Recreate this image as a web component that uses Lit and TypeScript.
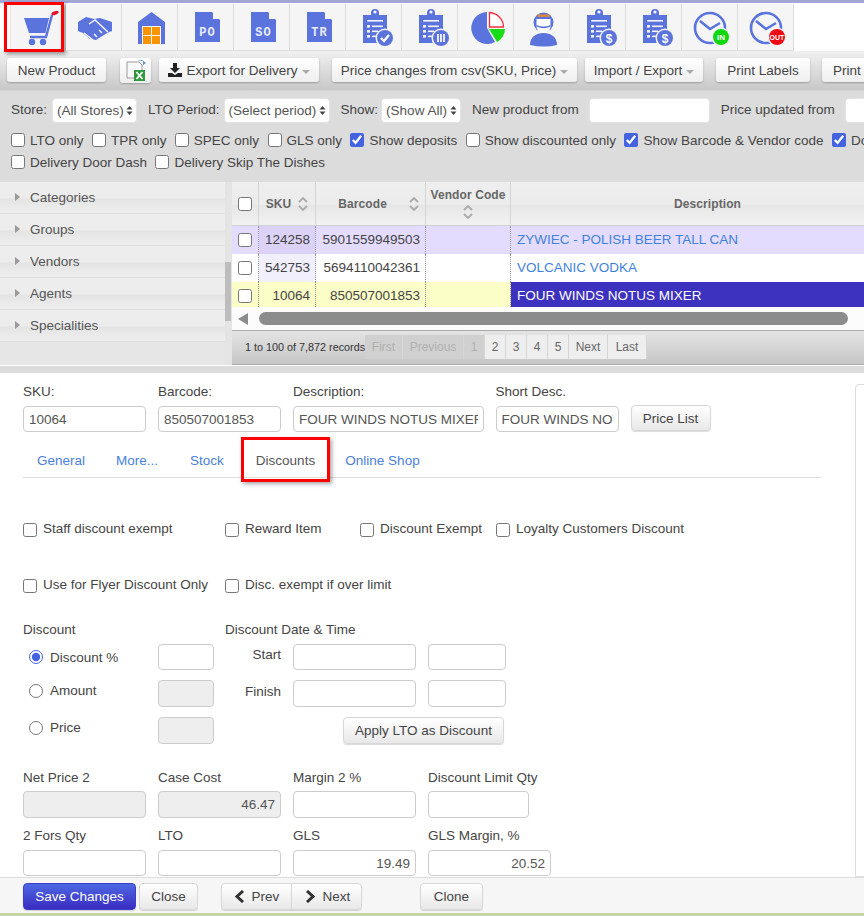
import { LitElement, html, css } from 'lit';
import { customElement } from 'lit/decorators.js';

const BLUE = '#5b73dc';

const clipboard = (badge: unknown) => html`
  <svg width="56" height="46" viewBox="0 0 56 46">
    <path fill=${BLUE} d="M17 11h8v-2a4 4 0 0 1 8 0v2h8v28H17z"/>
    <circle cx="29" cy="8" r="1.6" fill="#f5f5f5"/>
    <g fill="#f5f5f5">
      <rect x="21" y="16" width="16" height="1.6"/>
      <rect x="21" y="21" width="3" height="2.6"/><rect x="26" y="21.5" width="11" height="1.6"/>
      <rect x="21" y="26" width="3" height="2.6"/><rect x="26" y="26.5" width="6" height="1.6"/>
      <rect x="21" y="31" width="3" height="2.6"/><rect x="26" y="31.5" width="4" height="1.6"/>
    </g>
    <circle cx="39" cy="34" r="9.5" fill="#f5f5f5"/>
    <circle cx="39" cy="34" r="8" fill=${BLUE}/>
    ${badge}
  </svg>`;

const badgeCheck = html`<svg x="0" y="0"><path d="M35 34l3 3 5-6" fill="none" stroke="#fff" stroke-width="2.4"/></svg>`;
const badgeBars = html`<svg x="0" y="0"><path d="M36 30v8M39 30v8M42 30v8" fill="none" stroke="#fff" stroke-width="1.7"/></svg>`;
const badgeDollar = html`<svg x="0" y="0"><text x="39" y="38.5" text-anchor="middle" class="icon-text" font-size="12" fill="#fff">$</text></svg>`;

const clock = (color: string, label: string, size: number) => html`
  <svg width="56" height="46" viewBox="0 0 56 46">
    <circle cx="28" cy="24" r="15" fill="none" stroke=${BLUE} stroke-width="2.6"/>
    <path d="M18 17l10 8 10-6" fill="none" stroke=${BLUE} stroke-width="2.6"/>
    <circle cx="39" cy="33" r="9.5" fill="#f5f5f5"/>
    <circle cx="39" cy="33" r="8" fill=${color}/>
    <text x="39" y="36" text-anchor="middle" class="icon-text" font-size=${size} fill="#fff">${label}</text>
  </svg>`;

const doc = (label: string) => html`
  <svg width="56" height="46" viewBox="0 0 56 46">
    <path fill=${BLUE} d="M17 8h17l8 8v22H17z"/>
    <path fill="#f5f5f5" d="M35 8l7 7h-7z"/>
    <text x="29.5" y="31.5" text-anchor="middle" class="doc-text" font-size="12" letter-spacing="1" fill="#e8ebff">${label}</text>
  </svg>`;

const ICONS = [
  html`<svg width="56" height="46" viewBox="0 0 56 46">
    <path fill=${BLUE} d="M13 14h25l-3.500 15H18z"/>
    <path d="M41 11l-6 22H19" fill="none" stroke=${BLUE} stroke-width="2.4"/>
    <circle cx="21" cy="38" r="3.2" fill=${BLUE}/><circle cx="32" cy="38" r="3.2" fill=${BLUE}/>
    <ellipse cx="44" cy="9" rx="3.8" ry="1.8" fill="#e8102a" transform="rotate(-20 44 9)"/>
  </svg>`,
  html`<svg width="56" height="46" viewBox="0 0 56 46">
    <path fill=${BLUE} d="M12 18l8-5 8 2 6-1 12 4v9l-5 2-11 7-6-1-7-6-5-2z"/>
    <path d="M18 29l9 7M23 20l6-4 13 12M28 30l3 3M33 26l3 3" fill="none" stroke="#f5f5f5" stroke-width="1.5"/>
  </svg>`,
  html`<svg width="56" height="46" viewBox="0 0 56 46">
    <path fill=${BLUE} d="M16 18L29.5 8 43 18v22H16z"/>
    <rect x="20" y="22" width="19" height="18" fill="#f5f5f5"/>
    <g fill="#f79400">
      <rect x="21" y="23" width="8" height="8"/><rect x="30" y="23" width="8" height="8"/>
      <rect x="21" y="32" width="8" height="8"/><rect x="30" y="32" width="8" height="8"/>
    </g>
  </svg>`,
  doc('PO'),
  doc('SO'),
  doc('TR'),
  clipboard(badgeCheck),
  clipboard(badgeBars),
  html`<svg width="56" height="46" viewBox="0 0 56 46">
    <path fill=${BLUE} d="M29 8a16 16 0 1 0 8 30L29 24z"/>
    <path fill="#fff" stroke="#f4303c" stroke-width="1.3" d="M31.5 8.5a15 15 0 0 1 14 14.5h-14z"/>
    <path fill="#18dc18" d="M31 25h16a16 16 0 0 1-8 13z"/>
  </svg>`,
  html`<svg width="56" height="46" viewBox="0 0 56 46">
    <path fill=${BLUE} d="M16 41c0-8 6-12 13.500-12S43 33 43 41q-13 3-27 0z"/>
    <circle cx="29.500" cy="18.500" r="10" fill=${BLUE}/>
    <path fill="#fff" d="M22.500 15h14v7c0 4-3 7-7 7s-7-3-7-7z"/>
    <path fill=${BLUE} d="M22.500 21q7 3 14 0v1.500q-7 3.500-14 0z"/>
    <rect x="23.500" y="10.500" width="12" height="2.400" fill="#e08a30"/>
  </svg>`,
  clipboard(badgeDollar),
  clipboard(badgeDollar),
  clock('#10d810', 'IN', 8),
  clock('#ee0a14', 'OUT', 7),
];

const FILTERS_ONE: [string, boolean][] = [
  ['LTO only', false], ['TPR only', false], ['SPEC only', false], ['GLS only', false],
  ['Show deposits', true], ['Show discounted only', false],
  ['Show Barcode & Vendor code', true], ['Do', true],
];
const FILTERS_TWO = ['Delivery Door Dash', 'Delivery Skip The Dishes'];
const GROUPS = ['Categories', 'Groups', 'Vendors', 'Agents', 'Specialities'];
const ROWS = [
  { sku: '124258', barcode: '5901559949503', name: 'ZYWIEC - POLISH BEER TALL CAN', cls: 'odd' },
  { sku: '542753', barcode: '5694110042361', name: 'VOLCANIC VODKA', cls: 'even' },
  { sku: '10064', barcode: '850507001853', name: 'FOUR WINDS NOTUS MIXER', cls: 'sel' },
];
const TABS = ['General', 'More...', 'Stock', 'Discounts', 'Online Shop'];
const TAB_WIDTHS = [72, 80, 60, 89, 105];

const caret = html`<span class="caret"></span>`;
const sort = html`<svg class="sort" width="10" height="14" viewBox="0 0 10 14"><path d="M1 5l4-4 4 4M1 9l4 4 4-4" fill="none" stroke="#aaa" stroke-width="1.800"/></svg>`;

@customElement('app-root')
export class AppRoot extends LitElement {
  static styles = css`
    :host {
      display: block;
      width: 864px;
      height: 916px;
      overflow: hidden;
      font-family: "Liberation Sans", Arial, sans-serif;
      font-size: 13.5px;
      color: #444;
      background: #fff;
    }
    * { box-sizing: border-box; }
    .page { display: flex; flex-direction: column; height: 916px; }
    .icon-text { font-family: "Liberation Sans", Arial, sans-serif; font-weight: 700; }
    .doc-text { font-family: "Liberation Mono", monospace; font-weight: 700; }
    input[type="checkbox"], input[type="radio"] {
      width: 14px; height: 14px; margin: 0; flex: none; accent-color: #4463e0;
    }

    .icons { display: flex; height: 51px; padding-left: 10px; border-top: 3px solid #a2a6d4; padding-top: 1px; flex: none; }
    .icon-cell { position: relative; width: 56px; height: 47px; background: #f5f5f5; border: solid #dcdcdc; border-width: 0 1px 1px 0; }
    .icon-cell:first-child { border-left: 1px solid #e6e6e6; }
    .icon-cell svg { display: block; }
    .red-box { position: absolute; left: -7px; top: -2px; width: 60px; height: 50px; border: 3px solid #f00; box-shadow: 2px 2px 4px rgba(0,0,0,.4); }

    .toolbar {
      display: flex; align-items: flex-start; padding: 7px 0 0 7px; height: 39px; flex: none;
      background: linear-gradient(#f0f0f0, #c8c8c8); white-space: nowrap; overflow: hidden;
    }
    .btn {
      display: inline-flex; align-items: center; justify-content: center; flex: none; height: 24px; padding: 0 11px;
      border-radius: 3px; background: linear-gradient(#fff, #eee); box-shadow: 0 1px 2px rgba(0,0,0,.25); color: #444;
    }
    .gap8 { margin-left: 8px; }
    .gap13 { margin-left: 13px; }
    .gap12 { margin-left: 12px; }
    .gap14 { margin-left: 14px; }
    .excel { width: 31px; height: 25px; padding: 0; }
    .export { width: 160px; padding: 0; gap: 4px; }
    .export .caret { margin-left: 0; }
    .price { width: 245px; padding: 0; }
    .impexp { width: 118px; padding: 0; }
    .labels { width: 94px; padding: 0; }
    .print { width: 80px; padding: 0 0 0 11px; justify-content: flex-start; }
    .caret { display: inline-block; border: 4px solid transparent; border-top-color: #aaa; border-bottom: 0; margin-left: 4px; margin-top: 3px; }

    .filters { background: #dcdcdc; height: 92px; flex: none; padding: 7px 0 0 11px; white-space: nowrap; overflow: hidden; border-top: 1px solid #d4d4d4; }
    .filter-top { display: flex; align-items: center; height: 25px; margin-bottom: 6px; }
    .filter-top span { flex: none; margin-bottom: 3px; }
    .select {
      appearance: none; flex: none; height: 25px; padding: 0 12px 0 4px; font: inherit; color: #555; border: 1px solid #e4e4e4; border-radius: 4px;
      background: #fff url("data:image/svg+xml,%3Csvg xmlns='http://www.w3.org/2000/svg' width='7' height='11'%3E%3Cpath d='M3.500 1l3 3.500H.5zM3.500 10l3-3.500H.5z' fill='%23444'/%3E%3C/svg%3E") no-repeat right 3px center;
    }
    .date { flex: none; height: 25px; border: 1px solid #e4e4e4; border-radius: 4px; background: #fff; }
    .check-row { display: flex; gap: 8.400px; height: 22px; align-items: center; }
    .check { display: flex; align-items: center; gap: 5px; flex: none; }

    .middle { display: flex; height: 183px; flex: none; }
    .sidebar { width: 225px; flex: none; background: #e6e6e6; }
    .group {
      display: flex; align-items: center; height: 32px; padding-left: 15px; padding-bottom: 1px; color: #555;
      background: linear-gradient(#eee 0, #ececec 50%, #e4e4e4 55%, #eeeeee 100%); border-bottom: 1px solid #dfdfdf;
    }
    .arrow { border: 4px solid transparent; border-left: 5px solid #999; border-right: 0; margin-right: 10px; }
    .gutter { width: 7px; flex: none; background: #e4e4e4; padding-top: 80px; }
    .gutter div { height: 59px; background: #bdbdbd; width: 6px; }
    .grid-wrap { width: 632px; flex: none; background: #fcfcfc; }
    .grid { display: grid; grid-template-columns: 27px 57px 110px 85px 353px; grid-template-rows: 44px 28px 28px 25px; }
    .head {
      display: flex; align-items: center; justify-content: center; gap: 7px; font-size: 12px; font-weight: 700; color: #666; letter-spacing: .1px;
      background: linear-gradient(#eee 0, #ececec 50%, #e6e6e6 55%, #f2f2f2 100%); border-right: 1px solid #d4d4d4; border-bottom: 1px solid #d0d0d0;
    }
    .head.stack { flex-direction: column; gap: 3px; }
    .head.wide-sort { justify-content: flex-end; padding-right: 6px; gap: 22px; }
    .head.desc { border-right: 0; padding-left: 40px; }
    .cell { display: flex; align-items: center; justify-content: flex-end; padding-right: 5px; border-right: 1px dotted #999; color: #444; }
    .cell.box { justify-content: center; padding: 0; }
    .cell.name { justify-content: flex-start; padding: 0 0 0 6px; border: 0; color: #3f82dc; }
    .odd { background: #e4dcff; }
    .odd.key { background: #dcd2f8; }
    .even { background: #fff; }
    .even.key { background: #f1effc; }
    .sel { background: #fbfec6; }
    .sel.name { background: #3d32c0; color: #fff; }
    .odd:not(.box), .even:not(.box) { padding-bottom: 2px; }
    .sel:not(.box) { padding-top: 1px; }
    .sel.box { padding-top: 3px; }
    .hscroll { display: flex; align-items: flex-start; height: 23px; padding: 5px 0 0 6px; background: #fcfcfc; }
    .hscroll-left { width: 0; height: 0; border: 6px solid transparent; border-right: 10px solid #8c8c8c; border-left: 0; margin-top: 1px; }
    .hscroll-thumb { width: 589px; height: 13px; margin-left: 11px; border-radius: 7px; background: #8c8c8c; }
    .pager {
      display: flex; align-items: flex-start; height: 35px; padding: 4px 0 0 13px; font-size: 12px; color: #666;
      background: linear-gradient(#e4e4e4, #c6c6c6); border-top: 1px solid #aaa; border-bottom: 1px solid #aaa;
    }
    .records { color: #333; width: 120px; height: 24px; line-height: 25px; white-space: nowrap; font-size: 10.800px; }
    .page-btn { height: 24px; line-height: 24px; text-align: center; background: #eee; border-right: 1px solid #d6d6d6; }
    .page-btn.off { background: #d0d0d0; color: #b0b0b0; }
    .strip { height: 8px; flex: none; background: #dcdcdc; border-top: 1px solid #fff; }

    .content { display: flex; flex: 1; min-height: 0; overflow: hidden; }
    .form { width: 855px; flex: none; padding: 10px 0 0 23px; }
    .side-panel { width: 30px; flex: none; margin-top: 11px; border: 1px solid #ddd; border-radius: 4px 0 0 0; }
    label, .lbl { display: block; height: 16px; line-height: 18px; }
    .input {
      display: block; width: 100%; height: 26px; padding: 0 5px; font: inherit; color: #555; background: #fff;
      border: 1px solid #ccc; border-radius: 4px; outline: none;
    }
    .tall { height: 27px; }
    .input.right { text-align: right; }
    .input.off { background: #eee; }
    .head-fields { display: grid; grid-template-columns: 123px 123px 190.500px 123px 80px; column-gap: 12px; align-items: end; }
    .head-fields label { margin-bottom: 7px; }
    .form-btn { display: inline-flex; align-items: center; justify-content: center; height: 26px; border: 1px solid #d8d8d8; border-radius: 4px; background: linear-gradient(#fff, #e8e8e8); box-shadow: 0 1px 1px rgba(0,0,0,.15); color: #444; }
    .list-btn { margin-bottom: 1px; }
    .tabs { display: flex; width: 798px; height: 38px; margin-top: 8px; padding-left: 2px; border-bottom: 1px solid #ddd; }
    .tab { position: relative; display: flex; align-items: center; justify-content: center; height: 37px; padding-top: 3px; color: #4a7fdc; }
    .tab.active { color: #555; margin-left: 4px; }
    .tab-box { position: absolute; left: 0; top: -3px; width: 89px; height: 45px; border: 3px solid #f00; box-shadow: 2px 2px 4px rgba(0,0,0,.35); }
    .flag-row { display: grid; grid-template-columns: 202px 135px 136px auto; height: 20px; margin-top: 42px; align-items: center; white-space: nowrap; }
    .flag-row + .flag-row { margin-top: 36px; }
    .flag-row .check { gap: 6px; }
    .flag-row .check span { margin-top: -4px; }
    .disc-title { display: grid; grid-template-columns: 202px auto; margin-top: 25px; }
    .disc { display: grid; grid-template-columns: 135px 56px 79px 123px 90px; grid-template-rows: 26px 27px 27px; row-gap: 10px; margin-top: 7px; }
    .radio { display: flex; align-items: center; gap: 7px; padding-left: 6px; }
    .lift { margin-bottom: 6px; }
    .lift-small { margin-bottom: 4px; }
    .side-lbl { align-self: center; text-align: right; padding-right: 12px; }
    .time-in { margin-left: 12px; width: 78px; }
    .apply { grid-column: 4 / span 2; width: 161px; height: 27px; margin-left: 50px; }
    .bottom { display: grid; grid-template-columns: repeat(4, 123px); column-gap: 12px; margin-top: 25px; }
    .bottom .lbl { margin-bottom: 6px; }
    .bottom .second { margin-top: 9px; }
    .bottom .second .lbl { margin-bottom: 7px; }
    .w101 { width: 101px; }

    .footer { display: flex; align-items: flex-start; height: 36px; flex: none; padding: 5px 0 0 23px; background: #f6f6f6; border-top: 1px solid #ddd; }
    .footer .form-btn { height: 27px; }
    .save { width: 113px; border: 1px solid #3a3fc8; background: linear-gradient(#4d68e4, #3a2cc0); color: #fff; }
    .close { width: 59px; margin-left: 3px; }
    .prev { width: 71px; margin-left: 23px; border-radius: 4px 0 0 4px; gap: 7px; }
    .next { width: 71px; margin-left: -1px; border-radius: 0 4px 4px 0; gap: 7px; padding-left: 2px; }
    .clone { width: 63px; margin-left: 58px; }
    .base { height: 3px; flex: none; background: #c4d6a6; }
    .new-product { width: 99px; padding: 0; }
    .store-select { width: 85px; margin-left: 5px; }
    .lto-select { width: 106px; margin-left: 4px; }
    .show-select { width: 80px; margin-left: 3px; }
    .new-from { width: 121px; margin-left: 10px; }
    .price-from { width: 60px; margin-left: 10px; }
    .filter-label { margin-left: 11px; }
  `;

  private renderFilterBar() {
    return html`
      <div class="filters">
        <div class="filter-top">
          <span>Store:</span>
          <select class="select store-select"><option>(All Stores)</option></select>
          <span class="filter-label">LTO Period:</span>
          <select class="select lto-select"><option>(Select period)</option></select>
          <span class="filter-label">Show:</span>
          <select class="select show-select"><option>(Show All)</option></select>
          <span class="filter-label">New product from</span>
          <div class="date new-from"></div>
          <span class="filter-label">Price updated from</span>
          <div class="date price-from"></div>
        </div>
        <div class="check-row">
          ${FILTERS_ONE.map(([text, on]) => html`<div class="check"><input type="checkbox" .checked=${on}><span>${text}</span></div>`)}
        </div>
        <div class="check-row">
          ${FILTERS_TWO.map(text => html`<div class="check"><input type="checkbox"><span>${text}</span></div>`)}
        </div>
      </div>
    `;
  }

  private renderGrid() {
    const pages: [string, number, boolean][] = [
      ['First', 38, true], ['Previous', 61, true], ['1', 21, true], ['2', 21, false], ['3', 21, false],
      ['4', 21, false], ['5', 21, false], ['Next', 39, false], ['Last', 39, false],
    ];
    return html`
      <div class="grid-wrap">
        <div class="grid">
          <div class="head"><input type="checkbox"></div>
          <div class="head">SKU ${sort}</div>
          <div class="head wide-sort">Barcode ${sort}</div>
          <div class="head stack">Vendor Code ${sort}</div>
          <div class="head desc">Description</div>
          ${ROWS.map(row => html`
            <div class="cell box ${row.cls}"><input type="checkbox"></div>
            <div class="cell key ${row.cls}">${row.sku}</div>
            <div class="cell ${row.cls}">${row.barcode}</div>
            <div class="cell ${row.cls}"></div>
            <div class="cell name ${row.cls}">${row.name}</div>
          `)}
        </div>
        <div class="hscroll"><div class="hscroll-left"></div><div class="hscroll-thumb"></div></div>
        <div class="pager">
          <div class="records">1 to 100 of 7,872 records</div>
          ${pages.map(([text, width, off]) => html`<div class="page-btn ${off ? 'off' : ''}" style="width:${width}px">${text}</div>`)}
        </div>
      </div>
    `;
  }

  private renderForm() {
    return html`
      <div class="form">
        <div class="head-fields">
          <div><label>SKU:</label><input class="input" value="10064"></div>
          <div><label>Barcode:</label><input class="input" value="850507001853"></div>
          <div><label>Description:</label><input class="input" value="FOUR WINDS NOTUS MIXER"></div>
          <div><label>Short Desc.</label><input class="input" value="FOUR WINDS NOTUS MIXER"></div>
          <div class="form-btn list-btn">Price List</div>
        </div>
        <div class="tabs">
          ${TABS.map((tab, i) => html`
            <div class="tab ${i === 3 ? 'active' : ''}" style="width:${TAB_WIDTHS[i]}px">
              ${tab}${i === 3 ? html`<div class="tab-box"></div>` : ''}
            </div>`)}
        </div>
        <div class="flag-row">
          ${['Staff discount exempt', 'Reward Item', 'Discount Exempt', 'Loyalty Customers Discount'].map(text => html`
            <div class="check"><input type="checkbox"><span>${text}</span></div>`)}
        </div>
        <div class="flag-row">
          ${['Use for Flyer Discount Only', 'Disc. exempt if over limit'].map(text => html`
            <div class="check"><input type="checkbox"><span>${text}</span></div>`)}
        </div>
        <div class="disc-title"><span class="lbl">Discount</span><span class="lbl">Discount Date &amp; Time</span></div>
        <div class="disc">
          <div class="radio"><input type="radio" name="d" checked><span>Discount %</span></div>
          <input class="input">
          <div class="side-lbl lift">Start</div>
          <input class="input">
          <input class="input time-in">

          <div class="radio lift"><input type="radio" name="d"><span>Amount</span></div>
          <input class="input off tall">
          <div class="side-lbl lift-small">Finish</div>
          <input class="input tall">
          <input class="input time-in tall">

          <div class="radio lift"><input type="radio" name="d"><span>Price</span></div>
          <input class="input off tall">
          <div></div>
          <div class="form-btn apply">Apply LTO as Discount</div>
        </div>
        <div class="bottom">
          <div><span class="lbl">Net Price 2</span><input class="input off tall"></div>
          <div><span class="lbl">Case Cost</span><input class="input off right tall" value="46.47"></div>
          <div><span class="lbl">Margin 2 %</span><input class="input tall"></div>
          <div><span class="lbl">Discount Limit Qty</span><input class="input w101 tall"></div>
          <div class="second"><span class="lbl">2 Fors Qty</span><input class="input"></div>
          <div class="second"><span class="lbl">LTO</span><input class="input"></div>
          <div class="second"><span class="lbl">GLS</span><input class="input right" value="19.49"></div>
          <div class="second"><span class="lbl">GLS Margin, %</span><input class="input right" value="20.52"></div>
        </div>
      </div>
    `;
  }

  render() {
    return html`
      <div class="page">
        <div class="icons">
          ${ICONS.map((icon, i) => html`<div class="icon-cell">${icon}${i === 0 ? html`<div class="red-box"></div>` : ''}</div>`)}
        </div>
        <div class="toolbar">
          <div class="btn new-product">New Product</div>
          <div class="btn excel gap14">
            <svg width="24" height="22" viewBox="0 0 24 22">
              <path d="M3 2h12l3 3v13H3z" fill="#fafafa" stroke="#9a9a9a"/>
              <path d="M13 1h6v4l3-2-4-3z" fill="#5b8fd0"/>
              <rect x="10" y="10" width="11" height="11" fill="#2f9a3c"/>
              <path d="M12.500 12l6 7M18.500 12l-6 7" stroke="#fff" stroke-width="1.800"/>
            </svg>
          </div>
          <div class="btn export gap8">
            <svg width="14" height="14" viewBox="0 0 14 14"><path d="M5 0h4v5h3L7 10 2 5h3zM0 10h4l3 2 3-2h4v4H0z" fill="#222"/></svg>
            Export for Delivery${caret}
          </div>
          <div class="btn price gap13">Price changes from csv(SKU, Price)${caret}</div>
          <div class="btn impexp gap8">Import / Export${caret}</div>
          <div class="btn labels gap13">Print Labels</div>
          <div class="btn print gap12">Print</div>
        </div>
        ${this.renderFilterBar()}
        <div class="middle">
          <div class="sidebar">
            ${GROUPS.map(group => html`<div class="group"><span class="arrow"></span>${group}</div>`)}
          </div>
          <div class="gutter"><div></div></div>
          ${this.renderGrid()}
        </div>
        <div class="strip"></div>
        <div class="content">
          ${this.renderForm()}
          <div class="side-panel"></div>
        </div>
        <div class="footer">
          <div class="form-btn save">Save Changes</div>
          <div class="form-btn close">Close</div>
          <div class="form-btn prev">
            <svg width="11" height="13" viewBox="0 0 11 13"><path d="M9 1L3 6.500 9 12" fill="none" stroke="#333" stroke-width="3"/></svg>Prev
          </div>
          <div class="form-btn next">
            <svg width="11" height="13" viewBox="0 0 11 13"><path d="M2 1l6 5.500L2 12" fill="none" stroke="#333" stroke-width="3"/></svg>Next
          </div>
          <div class="form-btn clone">Clone</div>
        </div>
        <div class="base"></div>
      </div>
    `;
  }
}
